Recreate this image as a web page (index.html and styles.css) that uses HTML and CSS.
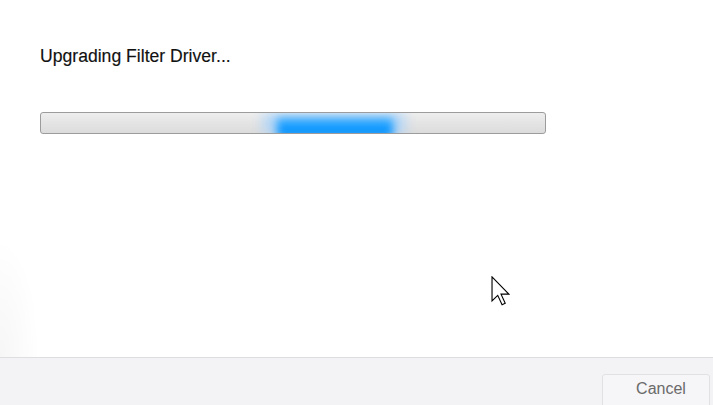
FILE: index.html
```html
<!DOCTYPE html>
<html>
<head>
<meta charset="utf-8">
<link rel="stylesheet" href="styles.css">
</head>
<body>
<div class="dialog">
  <div class="content">
    <div class="status">Upgrading Filter Driver...</div>
    <div class="progress"><div class="halo"></div><div class="glow"></div></div>
  </div>
  <div class="footer">
    <button class="cancel">Cancel</button>
  </div>
  <svg class="cursor" width="19" height="30" viewBox="0 0 12.5 20" xmlns="http://www.w3.org/2000/svg">
    <path d="M0.6 0.6 V16.6 L4.4 12.9 L7.3 19.2 L9.4 18.2 L6.6 12.1 H11.8 Z" fill="#fff" stroke="#000" stroke-width="0.75" stroke-linejoin="miter"/>
  </svg>
</div>
</body>
</html>
```
FILE: styles.css
```css
html, body {
  margin: 0;
  padding: 0;
  background: #fff;
}
body {
  font-family: "Liberation Sans", Arial, sans-serif;
}
.dialog {
  position: relative;
  width: 713px;
  height: 405px;
  display: flex;
  flex-direction: column;
  overflow: hidden;
}
.content {
  flex: 1;
  padding: 46px 0 0 40px;
  background:
    radial-gradient(ellipse 40px 120px at 0 100%, rgba(0,0,0,0.035), rgba(0,0,0,0) 100%),
    #fff;
}
.status {
  font-size: 17.6px;
  color: #111;
  line-height: 20px;
  -webkit-text-stroke: 0.15px #111;
}
.progress {
  position: relative;
  margin-top: 46px;
  width: 504px;
  height: 20px;
  border: 1px solid #9c9c9c;
  border-radius: 3px;
  background: linear-gradient(#eeeeee, #e4e4e4 50%, #dcdcdc);
  overflow: hidden;
}
.halo {
  position: absolute;
  left: 222px;
  top: 0;
  width: 142px;
  height: 22px;
  background: #9fd0ff;
  opacity: 0.7;
  filter: blur(6px);
}
.glow {
  position: absolute;
  left: 236px;
  top: 5px;
  width: 116px;
  height: 20px;
  background: linear-gradient(#3fb0ff, #0a96ff 60%, #0a8ef5);
  filter: blur(4px);
}
.footer {
  height: 47px;
  border-top: 1px solid #dedddf;
  background: #f3f2f4;
  display: flex;
  justify-content: flex-end;
  align-items: flex-start;
  padding-right: 3px;
}
.cancel {
  margin-top: 16px;
  width: 108px;
  height: 36px;
  border: 1px solid #e1e0e2;
  border-radius: 3px;
  background: #f6f5f7;
  color: #6a6a6a;
  font-family: "Liberation Sans", Arial, sans-serif;
  font-size: 16px;
  padding: 0 0 6px 10px;
  text-align: center;
}
.cursor {
  position: absolute;
  left: 491px;
  top: 276px;
}
```
